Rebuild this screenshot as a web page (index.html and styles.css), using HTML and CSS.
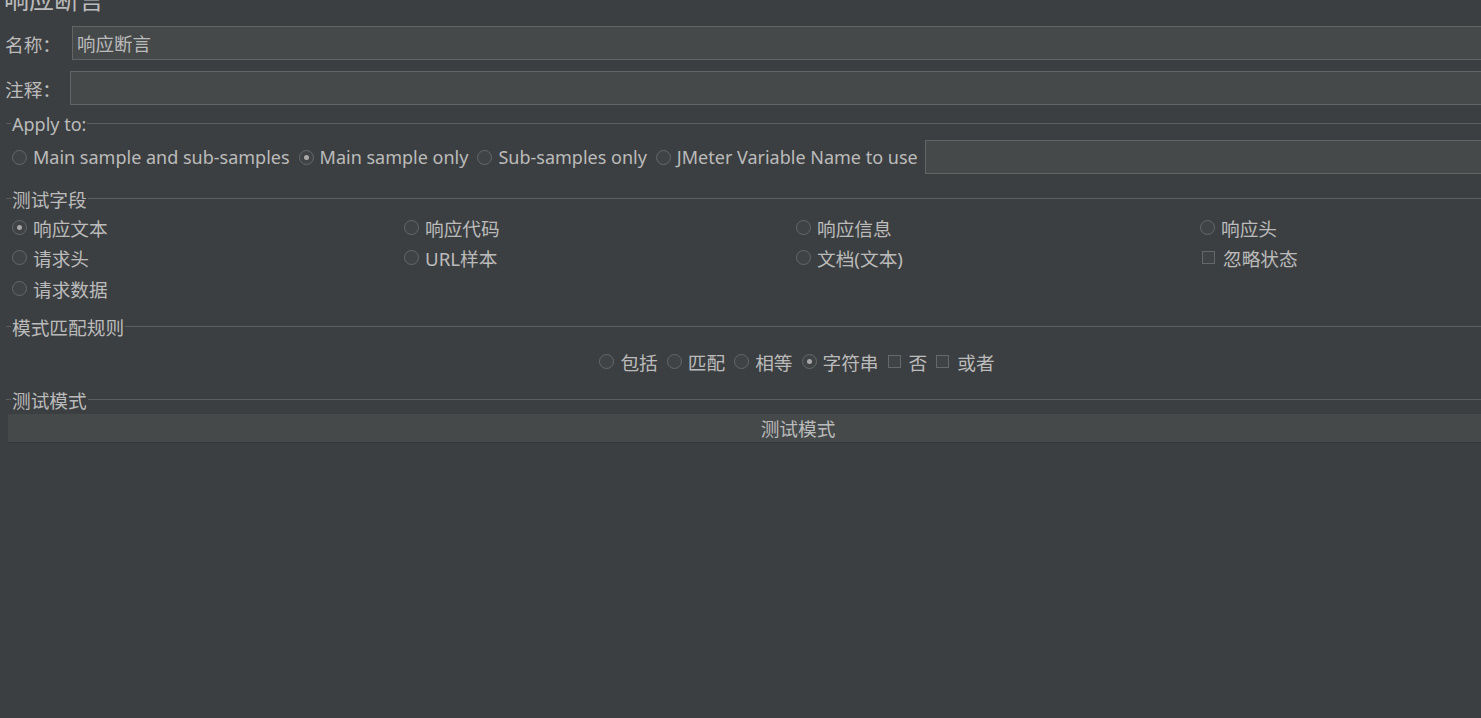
FILE: index.html
```html
<!DOCTYPE html>
<html lang="zh">
<head>
<meta charset="utf-8">
<title>响应断言</title>
<link rel="stylesheet" href="styles.css">
</head>
<body>
<div class="panel">
  <div class="title">响应断言</div>

  <div class="field-row">
    <label class="field-label name-label">名称：</label>
    <div class="text-input">响应断言</div>
  </div>
  <div class="field-row comment-row">
    <label class="field-label comment-label">注释：</label>
    <div class="text-input"></div>
  </div>

  <div class="group apply-group">
    <div class="group-title"><span class="gt-text">Apply to:</span></div>
    <div class="apply-row">
      <span class="opt"><span class="radio"></span>Main sample and sub-samples</span>
      <span class="opt"><span class="radio checked"></span>Main sample only</span>
      <span class="opt"><span class="radio"></span>Sub-samples only</span>
      <span class="opt"><span class="radio"></span>JMeter Variable Name to use</span>
      <div class="text-input var-input"></div>
    </div>
  </div>

  <div class="group fields-group">
    <div class="group-title"><span class="gt-text">测试字段</span></div>
    <div class="field-grid">
      <span class="opt"><span class="radio checked"></span>响应文本</span>
      <span class="opt"><span class="radio"></span>响应代码</span>
      <span class="opt"><span class="radio"></span>响应信息</span>
      <span class="opt"><span class="radio"></span>响应头</span>
      <span class="opt"><span class="radio"></span>请求头</span>
      <span class="opt"><span class="radio"></span>URL样本</span>
      <span class="opt"><span class="radio"></span>文档(文本)</span>
      <span class="opt opt-check"><span class="check"></span>忽略状态</span>
      <span class="opt"><span class="radio"></span>请求数据</span>
    </div>
  </div>

  <div class="group rules-group">
    <div class="group-title"><span class="gt-text">模式匹配规则</span></div>
    <div class="rules-row">
      <span class="opt"><span class="radio"></span>包括</span>
      <span class="opt"><span class="radio"></span>匹配</span>
      <span class="opt"><span class="radio"></span>相等</span>
      <span class="opt"><span class="radio checked"></span>字符串</span>
      <span class="opt"><span class="check"></span>否</span>
      <span class="opt"><span class="check"></span>或者</span>
    </div>
  </div>

  <div class="group patterns-group">
    <div class="group-title"><span class="gt-text">测试模式</span></div>
  </div>
  <div class="table-header">测试模式</div>
</div>
</body>
</html>
```

FILE: styles.css
```css
html, body {
  margin: 0;
  padding: 0;
  background: #3c3f41;
  overflow: hidden;
  height: 100%;
}

body {
  color: #bbbbbb;
  font-family: "Noto Sans", "Noto Sans CJK SC", sans-serif;
  font-size: 18px;
}

.panel {
  width: 1588px;
}

.title {
  height: 24px;
  line-height: 24px;
  margin-top: -14px;
  margin-bottom: 16px;
  padding-left: 4px;
  font-family: "Noto Sans CJK SC", sans-serif;
  font-size: 25px;
}

.field-row {
  display: flex;
  align-items: center;
  height: 34px;
}

.comment-row {
  margin-top: 11px;
}

.field-label {
  font-family: "Noto Sans CJK SC", sans-serif;
  font-size: 18.7px;
  padding-left: 5px;
  box-sizing: border-box;
}

.name-label { width: 72px; }
.comment-label { width: 70px; }

.text-input {
  flex: 1;
  height: 34px;
  box-sizing: border-box;
  background: #45494a;
  border: 1px solid #646464;
  display: flex;
  align-items: center;
  padding-left: 4px;
  font-family: "Noto Sans CJK SC", sans-serif;
  font-size: 18.5px;
}

.group {
  margin-left: 6px;
}

.group-title {
  display: flex;
  height: 20px;
  margin-top: 9px;
  font-family: "Noto Sans CJK SC", sans-serif;
  font-size: 18.7px;
}

.apply-group .group-title {
  font-family: "Noto Sans", sans-serif;
  font-size: 18px;
}

.group-title::before,
.group-title::after {
  content: "";
  height: 1px;
  background: #5b5e60;
  margin-top: 9px;
}

.group-title::before { width: 5px; }
.group-title::after { flex: 1; }

.gt-text {
  line-height: 20px;
  padding: 0 1px;
}

.apply-row {
  display: flex;
  align-items: center;
  height: 34px;
  margin-top: 6px;
  padding-left: 6px;
  font-family: "Noto Sans", sans-serif;
  font-size: 18px;
}

.apply-row .opt {
  margin-right: 9px;
}

.apply-row .opt:nth-child(4) {
  margin-right: 7px;
}

.opt {
  display: inline-flex;
  align-items: center;
  white-space: nowrap;
}

.radio {
  width: 15px;
  height: 15px;
  box-sizing: border-box;
  border: 1px solid #656869;
  border-radius: 50%;
  background: #404345;
  margin-right: 6px;
  display: inline-flex;
  align-items: center;
  justify-content: center;
  flex: none;
}

.radio.checked::after {
  content: "";
  width: 5px;
  height: 5px;
  border-radius: 50%;
  background: #a8a8a8;
}

.check {
  width: 13px;
  height: 13px;
  box-sizing: border-box;
  border: 1px solid #656869;
  background: #404345;
  margin-right: 8px;
  flex: none;
}

.fields-group .group-title {
  margin-top: 15px;
}

.field-grid {
  display: grid;
  grid-template-columns: 392px 392px 404px 1fr;
  grid-auto-rows: 30.5px;
  margin-top: 3px;
  padding-left: 6px;
  font-family: "Noto Sans", "Noto Sans CJK SC", sans-serif;
  font-size: 18.7px;
}

.field-grid .opt-check {
  padding-left: 2px;
}

.rules-group .group-title {
  margin-top: 13px;
}

.rules-row {
  display: flex;
  justify-content: center;
  align-items: center;
  height: 30px;
  margin-top: 10px;
  font-family: "Noto Sans CJK SC", sans-serif;
  font-size: 18.7px;
}

.rules-row .opt {
  margin-right: 9px;
}

.rules-row .opt:last-child {
  margin-right: 0;
}

.patterns-group .group-title {
  margin-top: 13px;
}

.table-header {
  margin-top: 4px;
  margin-left: 8px;
  height: 29px;
  box-sizing: border-box;
  background: #45494a;
  border-bottom: 1px solid #333537;
  display: flex;
  align-items: center;
  justify-content: center;
  font-family: "Noto Sans CJK SC", sans-serif;
  font-size: 18.7px;
}
```
